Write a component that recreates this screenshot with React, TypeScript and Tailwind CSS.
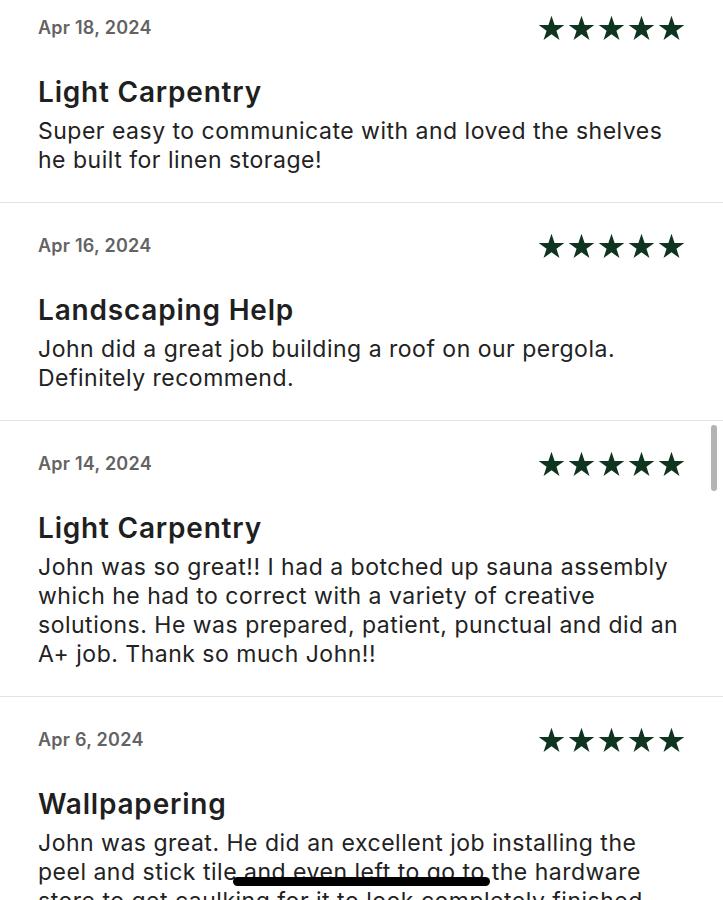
import React from "react";

const reviews = [
  {
    date: "Apr 18, 2024",
    title: "Light Carpentry",
    body: "Super easy to communicate with and loved the shelves he built for linen storage!",
  },
  {
    date: "Apr 16, 2024",
    title: "Landscaping Help",
    body: "John did a great job building a roof on our pergola. Definitely recommend.",
  },
  {
    date: "Apr 14, 2024",
    title: "Light Carpentry",
    body: "John was so great!! I had a botched up sauna assembly which he had to correct with a variety of creative solutions. He was prepared, patient, punctual and did an A+ job. Thank so much John!!",
  },
  {
    date: "Apr 6, 2024",
    title: "Wallpapering",
    body: "John was great. He did an excellent job installing the peel and stick tile and even left to go to the hardware store to get caulking for it to look completely finished and clean.",
  },
];

function Star() {
  return (
    <svg width="27" height="26" viewBox="0 0 24 23" className="block">
      <path
        d="M12 0.6l2.75 8.2h8.65l-7 5.1 2.68 8.3L12 17.1l-7.08 5.1 2.68-8.3-7-5.1h8.65z"
        fill="#0f3520"
      />
    </svg>
  );
}

function Stars() {
  return (
    <div className="flex gap-[3px]">
      <Star />
      <Star />
      <Star />
      <Star />
      <Star />
    </div>
  );
}

export default function App() {
  return (
    <div
      className="relative h-[900px] w-[723px] overflow-hidden bg-white"
      style={{ fontFamily: "Inter, 'Noto Sans', sans-serif" }}
    >
      <div className="-mt-[15px] flex flex-col">
        {reviews.map((r, i) => (
          <div
            key={i}
            className="border-b border-[#e3e3e3] pl-[38px] pr-[38px] pt-[29px] pb-[27px]"
          >
            <div className="flex h-[28px] items-center justify-between">
              <span className="text-[18px] font-semibold leading-[24px] tracking-[0.25px] text-[#636363]">
                {r.date}
              </span>
              <Stars />
            </div>
            <div className="mt-[33px] text-[28px] font-semibold leading-[34px] tracking-[0.8px] text-[#1f1f1f]">
              {r.title}
            </div>
            <p className="mt-[8px] text-[23px] leading-[29px] tracking-[0.5px] text-[#222222]">
              {r.body}
            </p>
          </div>
        ))}
      </div>
      <div className="absolute right-[6px] top-[425px] h-[66px] w-[6px] rounded-full bg-[#b3b3b3]" />
      <div className="absolute left-[233px] top-[877px] h-[9px] w-[257px] rounded-full bg-black" />
    </div>
  );
}
